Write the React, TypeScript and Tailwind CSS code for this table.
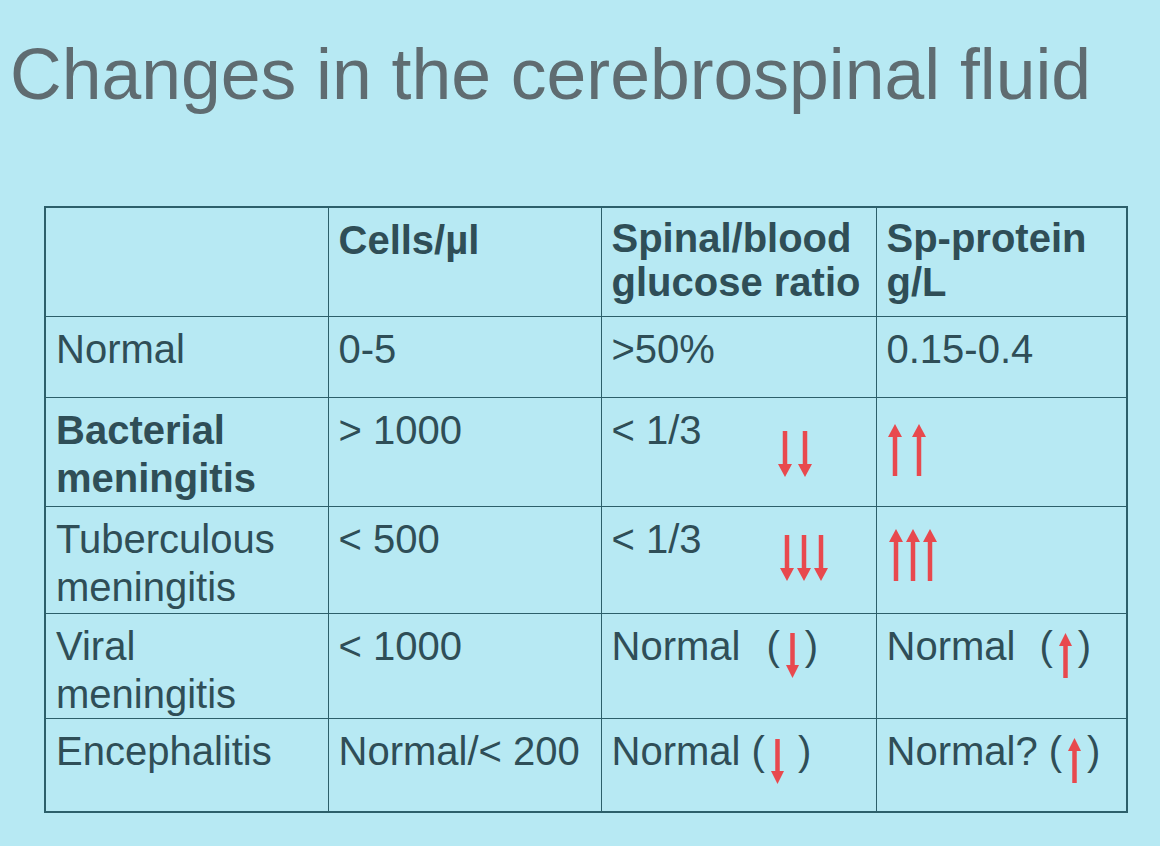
import React from "react";

const RED = "#e8494e";

// Slide arrow: a thick stem with a triangular head
function Arrow({ up = false, h = 46, w = 14 }: { up?: boolean; h?: number; w?: number }) {
  const c = w / 2;
  const head = 13;
  return (
    <svg width={w} height={h} viewBox={`0 0 ${w} ${h}`} className="inline-block shrink-0">
      {up ? (
        <>
          <line x1={c} y1={head - 1} x2={c} y2={h} stroke={RED} strokeWidth={4.5} />
          <polygon points={`${c},0 ${w},${head} 0,${head}`} fill={RED} />
        </>
      ) : (
        <>
          <line x1={c} y1={0} x2={c} y2={h - head + 1} stroke={RED} strokeWidth={4.5} />
          <polygon points={`0,${h - head} ${w},${h - head} ${c},${h}`} fill={RED} />
        </>
      )}
    </svg>
  );
}

function ArrowGroup({ up = false, n, h = 46, gap = "gap-[6px]" }: { up?: boolean; n: number; h?: number; gap?: string }) {
  return (
    <span className={`flex ${gap}`}>
      {Array.from({ length: n }).map((_, i) => (
        <Arrow key={i} up={up} h={h} />
      ))}
    </span>
  );
}

const cell = "border-[1.5px] border-[#2c5f6a] align-top px-[10px] pt-[8px]";

export default function App() {
  return (
    <div
      className="w-[1160px] h-[846px] bg-[#b7e9f3] pt-[38px] pl-[10px] overflow-hidden"
      style={{ fontFamily: '"Liberation Sans", Arial, sans-serif' }}
    >
      <h1 className="text-[71.5px] leading-[72px] text-[#5f6c71] whitespace-nowrap">
        Changes in the cerebrospinal fluid
      </h1>

      <table className="mt-[96px] ml-[34px] w-[1082px] table-fixed border-collapse border-2 border-[#2c5f6a] text-[40px] leading-[48px] text-[#2f4e57]">
        <colgroup>
          <col className="w-[283px]" />
          <col className="w-[273px]" />
          <col className="w-[275px]" />
          <col className="w-[251px]" />
        </colgroup>
        <tbody>
          <tr className="h-[109px] font-bold">
            <td className={cell}></td>
            <td className={cell}>Cells/µl</td>
            <td className={`${cell} leading-[44px]`}>
              Spinal/blood
              <br />
              glucose ratio
            </td>
            <td className={`${cell} leading-[44px]`}>
              Sp-protein
              <br />
              g/L
            </td>
          </tr>
          <tr className="h-[81px]">
            <td className={cell}>Normal</td>
            <td className={cell}>0-5</td>
            <td className={cell}>&gt;50%</td>
            <td className={cell}>0.15-0.4</td>
          </tr>
          <tr className="h-[109px]">
            <td className={`${cell} font-bold`}>
              Bacterial
              <br />
              meningitis
            </td>
            <td className={cell}>&gt; 1000</td>
            <td className={cell}>
              <div className="flex items-start">
                <span>&lt; 1/3</span>
                <span className="ml-[76px] mt-[25px]">
                  <ArrowGroup n={2} />
                </span>
              </div>
            </td>
            <td className={cell}>
              <div className="flex pl-[1px] pt-[18px]">
                <ArrowGroup up n={2} h={52} gap="gap-[10px]" />
              </div>
            </td>
          </tr>
          <tr className="h-[107px]">
            <td className={cell}>
              Tuberculous
              <br />
              meningitis
            </td>
            <td className={cell}>&lt; 500</td>
            <td className={cell}>
              <div className="flex items-start">
                <span>&lt; 1/3</span>
                <span className="ml-[78px] mt-[20px]">
                  <ArrowGroup n={3} gap="gap-[3px]" />
                </span>
              </div>
            </td>
            <td className={cell}>
              <div className="flex pl-[2px] pt-[14px]">
                <ArrowGroup up n={3} h={52} gap="gap-[3px]" />
              </div>
            </td>
          </tr>
          <tr className="h-[104px]">
            <td className={cell}>
              Viral
              <br />
              meningitis
            </td>
            <td className={cell}>&lt; 1000</td>
            <td className={`${cell} whitespace-nowrap`}>
              Normal<span className="inline-block w-[26px]"></span>(
              <span className="inline-block align-[-7px] mx-[6px]">
                <Arrow h={45} w={13} />
              </span>
              )
            </td>
            <td className={`${cell} whitespace-nowrap`}>
              Normal<span className="inline-block w-[24px]"></span>(
              <span className="inline-block align-[-7px] mx-[6px]">
                <Arrow up h={45} w={13} />
              </span>
              )
            </td>
          </tr>
          <tr className="h-[94px]">
            <td className={cell}>Encephalitis</td>
            <td className={`${cell} whitespace-nowrap`}>Normal/&lt; 200</td>
            <td className={`${cell} whitespace-nowrap`}>
              Normal (
              <span className="inline-block align-[-8px] ml-[6px] mr-[3px]">
                <Arrow h={45} w={13} />
              </span>{" "}
              )
            </td>
            <td className={`${cell} whitespace-nowrap`}>
              Normal? (
              <span className="inline-block align-[-7px] mx-[6px]">
                <Arrow up h={45} w={13} />
              </span>
              )
            </td>
          </tr>
        </tbody>
      </table>
    </div>
  );
}
